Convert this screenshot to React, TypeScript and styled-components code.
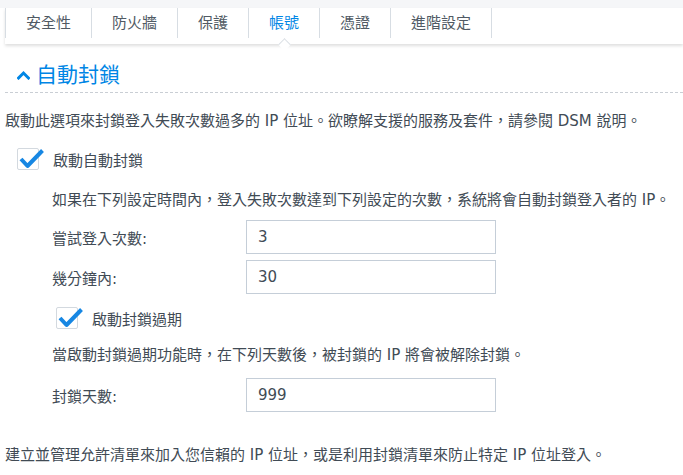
import styled, { createGlobalStyle } from "styled-components"

const GlobalStyle = createGlobalStyle`
  html, body {
    margin: 0;
    padding: 0;
    background: #fff;
  }
  body {
    font-family: "DejaVu Sans", "Noto Sans CJK TC", sans-serif;
    font-size: 15px;
    color: #414b55;
  }
`

const Page = styled.div`
  width: 683px;
  height: 475px;
  overflow: hidden;
  box-sizing: border-box;
`

const TabStrip = styled.div`
  border-top: 8px solid #f5f6f8;
`

const TabBar = styled.div`
  margin-left: 5px;
  height: 36px;
  display: flex;
  align-items: flex-start;
  background: #fff;
  box-shadow: 0 2px 3px rgba(0, 0, 0, 0.13);
  position: relative;
`

const Tab = styled.div<{ $active?: boolean; $last?: boolean }>`
  position: relative;
  height: 30px;
  line-height: 31px;
  padding: 0 20px;
  border-left: 1px solid #d7dde3;
  border-right: ${(p) => (p.$last ? "1px solid #d7dde3" : "none")};
  color: ${(p) => (p.$active ? "#0086e5" : "#505a64")};
  white-space: nowrap;

  ${(p) =>
    p.$active &&
    `
    &::after {
      content: "";
      position: absolute;
      top: 32px;
      left: calc(50% - 4px);
      width: 8px;
      height: 8px;
      background: #fff;
      border-top: 1px solid #dadfe4;
      border-left: 1px solid #dadfe4;
      transform: rotate(45deg);
    }
  `}
`

const SectionHeader = styled.div`
  margin-left: 5px;
  padding: 18px 0 4px 12px;
  display: flex;
  align-items: center;
  gap: 6px;
  border-bottom: 1px dashed #c9ced4;
`

const SectionTitle = styled.span`
  font-size: 21px;
  line-height: 26px;
  color: #0086e5;
`

const Body = styled.div`
  padding-left: 5px;
`

const Para = styled.p<{ $indent?: number; $mt: number }>`
  margin: ${(p) => p.$mt}px 0 0 ${(p) => p.$indent ?? 0}px;
  line-height: 20px;
  white-space: nowrap;
`

const CheckRow = styled.label<{ $indent: number; $mt: number }>`
  margin: ${(p) => p.$mt}px 0 0 ${(p) => p.$indent}px;
  display: flex;
  align-items: center;
  gap: 14px;
  height: 22px;
`

const Box = styled.span`
  position: relative;
  width: 20px;
  height: 20px;
  border: 1px solid #d3d9df;
  border-radius: 2px;
  background: #fff;
  flex: none;

  svg {
    position: absolute;
    left: 0;
    top: -1px;
    overflow: visible;
  }
`

const FieldRow = styled.div<{ $mt: number }>`
  margin: ${(p) => p.$mt}px 0 0 47px;
  display: flex;
  align-items: center;
`

const FieldLabel = styled.span`
  width: 194px;
  flex: none;
`

const Input = styled.input`
  box-sizing: border-box;
  width: 250px;
  height: 34px;
  border: 1px solid #c5ced8;
  border-radius: 0;
  padding: 0 11px;
  font: inherit;
  font-size: 15px;
  color: #414b55;
  background: #fff;
  outline: none;
`

function Chevron() {
  return (
    <svg width="13" height="10" viewBox="0 0 13 10">
      <path d="M1.5 8 L6.5 3 L11.5 8" fill="none" stroke="#0086e5" strokeWidth="3" strokeLinecap="square" />
    </svg>
  )
}

function Checkbox() {
  return (
    <Box>
      <svg width="26" height="22" viewBox="0 0 26 22">
        <path d="M3 11 L9.5 18 L24.5 2.5" fill="none" stroke="#1787e3" strokeWidth="4" strokeLinejoin="round" />
      </svg>
    </Box>
  )
}

const tabs = ["安全性", "防火牆", "保護", "帳號", "憑證", "進階設定"]

export default function App() {
  return (
    <Page>
      <GlobalStyle />
      <TabStrip>
        <TabBar>
          {tabs.map((t, i) => (
            <Tab key={t} $active={t === "帳號"} $last={i === tabs.length - 1}>
              {t}
            </Tab>
          ))}
        </TabBar>
      </TabStrip>

      <SectionHeader>
        <Chevron />
        <SectionTitle>自動封鎖</SectionTitle>
      </SectionHeader>

      <Body>
        <Para $mt={18}>
          啟動此選項來封鎖登入失敗次數過多的 IP 位址。欲瞭解支援的服務及套件，請參閱 DSM 說明。
        </Para>
        <CheckRow $indent={12} $mt={17}>
          <Checkbox />
          啟動自動封鎖
        </CheckRow>
        <Para $indent={47} $mt={20}>
          如果在下列設定時間內，登入失敗次數達到下列設定的次數，系統將會自動封鎖登入者的 IP。
        </Para>
        <FieldRow $mt={10}>
          <FieldLabel>嘗試登入次數:</FieldLabel>
          <Input defaultValue="3" />
        </FieldRow>
        <FieldRow $mt={6}>
          <FieldLabel>幾分鐘內:</FieldLabel>
          <Input defaultValue="30" />
        </FieldRow>
        <CheckRow $indent={51} $mt={13}>
          <Checkbox />
          啟動封鎖過期
        </CheckRow>
        <Para $indent={47} $mt={16}>
          當啟動封鎖過期功能時，在下列天數後，被封鎖的 IP 將會被解除封鎖。
        </Para>
        <FieldRow $mt={13}>
          <FieldLabel>封鎖天數:</FieldLabel>
          <Input defaultValue="999" />
        </FieldRow>
        <Para $mt={33}>
          建立並管理允許清單來加入您信賴的 IP 位址，或是利用封鎖清單來防止特定 IP 位址登入。
        </Para>
      </Body>
    </Page>
  )
}
